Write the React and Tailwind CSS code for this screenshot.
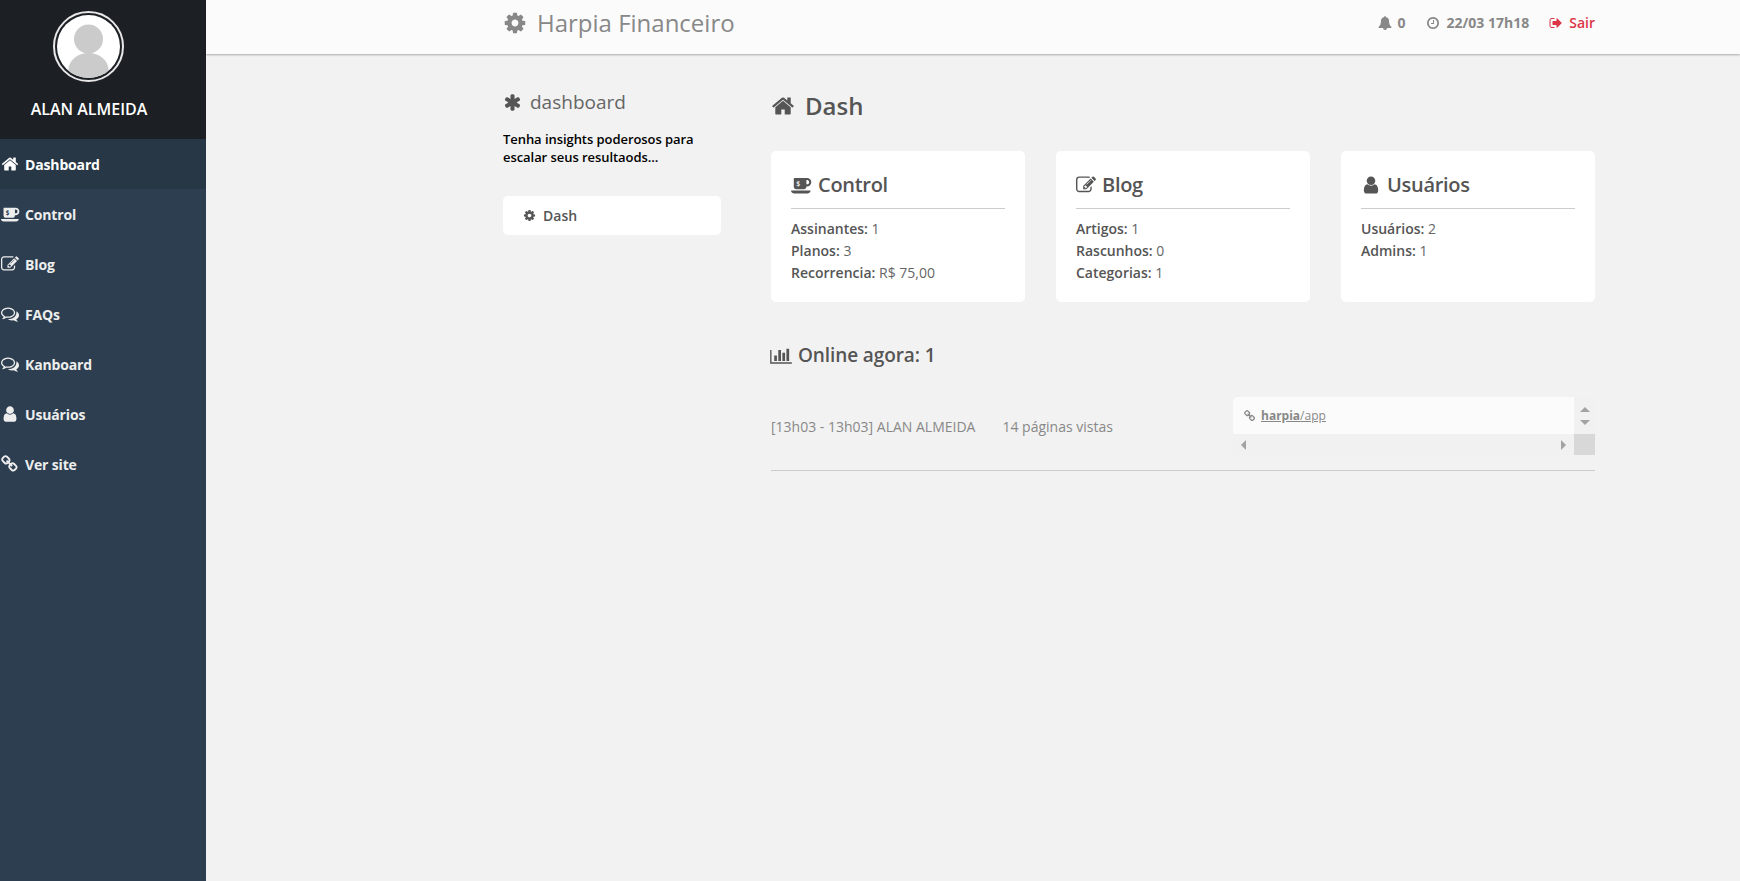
const PATHS = {
  home: "M1472 992v480q0 26-19 45t-45 19h-384v-384h-256v384h-384q-26 0-45-19t-19-45v-480q0-1 .5-3t.5-3l575-474 575 474q1 2 1 6zm223-69l-62 74q-8 9-21 11h-3q-13 0-21-7l-692-577-692 577q-12 8-24 7-13-2-21-11l-62-74q-8-10-7-23.5t11-21.5l719-599q32-26 76-26t76 26l244 204v-195q0-14 9-23t23-9h192q14 0 23 9t9 23v408l219 182q10 8 11 21.5t-7 23.5z",
  cog: "M1152 896q0-106-75-181t-181-75-181 75-75 181 75 181 181 75 181-75 75-181zm512-109v222q0 12-8 23t-20 13l-185 28q-19 54-39 91 35 50 107 138 10 12 10 25t-9 23q-27 37-99 108t-94 71q-12 0-26-9l-138-108q-44 23-91 38-16 136-29 186-7 28-36 28h-222q-14 0-24.5-8.5t-11.5-21.5l-28-184q-49-16-90-37l-141 107q-10 9-25 9-14 0-25-11-126-114-165-168-7-10-7-23 0-12 8-23 15-21 51-66.5t54-70.5q-27-50-41-99l-183-27q-13-2-21-12.5t-8-23.5v-222q0-12 8-23t19-13l186-28q14-46 39-92-40-57-107-138-10-12-10-24 0-10 9-23 26-36 98.5-107.5t94.5-71.5q13 0 26 10l138 107q44-23 91-38 16-136 29-186 7-28 36-28h222q14 0 24.5 8.5t11.5 21.5l28 184q49 16 90 37l142-107q9-9 24-9 13 0 25 10 129 119 165 170 7 8 7 22 0 12-8 23-15 21-51 66.5t-54 70.5q26 50 41 98l183 28q13 2 21 12.5t8 23.5z",
  user: "M1536 1399q0 109-62.5 187t-150.5 78h-854q-88 0-150.5-78t-62.5-187q0-85 8.5-160.5t31.5-152 58.5-131 94-89 134.5-34.5q131 128 313 128t313-128q76 0 134.5 34.5t94 89 58.5 131 31.5 152 8.5 160.5zm-256-887q0 159-112.5 271.5t-271.5 112.5-271.5-112.5-112.5-271.5 112.5-271.5 271.5-112.5 271.5 112.5 112.5 271.5z",
  asterisk: "M1546 1050q46 26 59.5 77.5t-12.5 97.5l-64 110q-26 46-77.5 59.5t-97.5-12.5l-266-153v307q0 52-38 90t-90 38h-128q-52 0-90-38t-38-90v-307l-266 153q-46 26-97.5 12.5t-77.5-59.5l-64-110q-26-46-12.5-97.5t59.5-77.5l266-154-266-154q-46-26-59.5-77.5t12.5-97.5l64-110q26-46 77.5-59.5t97.5 12.5l266 153v-307q0-52 38-90t90-38h128q52 0 90 38t38 90v307l266-153q46-26 97.5-12.5t77.5 59.5l64 110q26 46 12.5 97.5t-59.5 77.5l-266 154z",
  clock: "M1024 544v448q0 14-9 23t-23 9h-320q-14 0-23-9t-9-23v-64q0-14 9-23t23-9h224v-352q0-14 9-23t23-9h64q14 0 23 9t9 23zm416 352q0-148-73-273t-198-198-273-73-273 73-198 198-73 273 73 273 198 198 273 73 273-73 198-198 73-273zm224 0q0 209-103 385.5t-279.5 279.5-385.5 103-385.5-103-279.5-279.5-103-385.5 103-385.5 279.5-279.5 385.5-103 385.5 103 279.5 279.5 103 385.5z",
  bell: "M912 1696q0-16-16-16-59 0-101.5-42.5t-42.5-101.5q0-16-16-16t-16 16q0 73 51.5 124.5t124.5 51.5q16 0 16-16zm816-288q0 52-38 90t-90 38h-448q0 106-75 181t-181 75-181-75-75-181h-448q-52 0-90-38t-38-90q50-42 91-88t85-119.5 74.5-158.5 50-206 19.5-260q0-152 117-282.5t307-158.5q-8-19-8-39 0-40 28-68t68-28 68 28 28 68q0 20-8 39 190 28 307 158.5t117 282.5q0 139 19.5 260t50 206 74.5 158.5 85 119.5 91 88z",
  signout: "M704 1440q0 4 1 20t.5 26.5-3 23.5-10 19.5-20.5 6.5h-320q-119 0-203.5-84.5t-84.5-203.5v-704q0-119 84.5-203.5t203.5-84.5h320q13 0 22.5 9.5t9.5 22.5q0 4 1 20t.5 26.5-3 23.5-10 19.5-20.5 6.5h-320q-66 0-113 47t-47 113v704q0 66 47 113t113 47h312l11.5 1 11.5 3 8 5.5 7 9 2 13.5zm928-544q0 26-19 45l-544 544q-19 19-45 19t-45-19-19-45v-288h-448q-26 0-45-19t-19-45v-384q0-26 19-45t45-19h448v-288q0-26 19-45t45-19 45 19l544 544q19 19 19 45z",
  edit: "M888 1184l116-116-152-152-116 116v56h96v96h56zm440-720q-16-16-33 1l-350 350q-17 17-1 33t33-1l350-350q17-17 1-33zm80 594v190q0 119-84.5 203.5t-203.5 84.5h-832q-119 0-203.5-84.5t-84.5-203.5v-832q0-119 84.5-203.5t203.5-84.5h832q63 0 117 25 15 7 18 23 3 17-9 29l-49 49q-14 14-32 8-23-6-45-6h-832q-66 0-113 47t-47 113v832q0 66 47 113t113 47h832q66 0 113-47t47-113v-126q0-13 9-22l64-64q15-15 35-7t20 29zm-96-738l288 288-672 672h-288v-288zm444 132l-92 92-288-288 92-92q28-28 68-28t68 28l152 152q28 28 28 68t-28 68z",
  comments: "M704 384q-153 0-286 52t-211.5 141-78.5 191q0 82 53 158t149 132l97 56-35 84q34-20 62-39l44-31 53 10q78 14 153 14 153 0 286-52t211.5-141 78.5-191-78.5-191-211.5-141-286-52zm0-128q191 0 353.5 68.5t256.5 186.5 94 257-94 257-256.5 186.5-353.5 68.5q-86 0-176-16-124 88-278 128-36 9-86 16h-3q-11 0-20.5-8t-11.5-21q-1-3-1-6.5t.5-6.5 2-6l2.5-5 3.5-5.5 4-5 4.5-5 4-4.5q5-6 23-25t26-29.5 22.5-29 25-38.5 20.5-44q-124-72-195-177t-71-224q0-139 94-257t256.5-186.5 353.5-68.5zm822 1169q10 24 20.5 44t25 38.5 22.5 29 26 29.5 23 25q1 1 4 4.5t4.5 5 4 5 3.5 5.5l2.5 5 2 6 .5 6.5-1 6.5q-3 14-13 22t-22 7q-50-7-86-16-154-40-278-128-90 16-176 16-271 0-472-132 58 4 88 4 161 0 309-45t264-129q125-92 192-212t67-254q0-77-23-152 129 71 204 178t75 230q0 120-71 224.5t-195 176.5z",
  link: "M1456 1216q0-40-28-68l-208-208q-28-28-68-28-42 0-72 32 3 3 19 18.5t21.5 21.5 15 19 13 25.5 3.5 27.5q0 40-28 68t-68 28q-15 0-27.5-3.5t-25.5-13-19-15-21.5-21.5-18.5-19q-33 31-33 73 0 40 28 68l206 207q27 27 68 27 40 0 68-26l147-146q28-28 28-67zm-703-705q0-40-28-68l-206-207q-28-28-68-28-39 0-68 27l-147 146q-28 28-28 67 0 40 28 68l208 208q27 27 68 27 42 0 72-31-3-3-19-18.5t-21.5-21.5-15-19-13-25.5-3.5-27.5q0-40 28-68t68-28q15 0 27.5 3.5t25.5 13 19 15 21.5 21.5 18.5 19q33-31 33-73zm895 705q0 120-85 203l-147 146q-83 83-203 83-121 0-204-85l-206-207q-83-83-83-203 0-123 88-209l-88-88q-86 88-208 88-120 0-204-84l-208-208q-84-84-84-204t85-203l147-146q83-83 203-83 121 0 204 85l206 207q83 83 83 203 0 123-88 209l88 88q86-88 208-88 120 0 204 84l208 208q84 84 84 204z",
  chart: "M640 896v512h-256v-512h256zm384-512v1024h-256v-1024h256zm1024 1152v128h-2048v-1280h128v1152h1920zm-640-896v768h-256v-768h256zm384-384v1152h-256v-1152h256z",
};

function Icon({ name, className }) {
  const box = name === "chart" ? "0 0 2048 1792" : "0 0 1792 1792";
  return (
    <svg viewBox={box} className={className} fill="currentColor">
      <path d={PATHS[name]} />
    </svg>
  );
}

function CoffeeIcon({ className, dollar }) {
  return (
    <svg viewBox="-64 0 1920 1792" className={className} fill="currentColor">
      <path d="M1600 640q0-80-56-136t-136-56h-64v384h64q80 0 136-56t56-136zm-1664 768h1792q0 106-75 181t-181 75h-1280q-106 0-181-75t-75-181zm1856-768q0 159-112.5 271.5t-271.5 112.5h-64v32q0 92-66 158t-158 66h-704q-92 0-158-66t-66-158v-736q0-26 19-45t45-19h1152q159 0 271.5 112.5t112.5 271.5z" />
      <text x="600" y="960" fontSize="620" fontFamily="'Open Sans', sans-serif" textAnchor="middle" fill={dollar}>
        $
      </text>
    </svg>
  );
}

const menu = [
  { label: "Dashboard", icon: "home", active: true },
  { label: "Control", icon: "coffee" },
  { label: "Blog", icon: "edit" },
  { label: "FAQs", icon: "comments" },
  { label: "Kanboard", icon: "comments" },
  { label: "Usuários", icon: "user" },
  { label: "Ver site", icon: "link" },
];

const cards = [
  {
    title: "Control",
    icon: "coffee",
    rows: [
      ["Assinantes:", "1"],
      ["Planos:", "3"],
      ["Recorrencia:", "R$ 75,00"],
    ],
  },
  {
    title: "Blog",
    icon: "edit",
    rows: [
      ["Artigos:", "1"],
      ["Rascunhos:", "0"],
      ["Categorias:", "1"],
    ],
  },
  {
    title: "Usuários",
    icon: "user",
    rows: [
      ["Usuários:", "2"],
      ["Admins:", "1"],
    ],
  },
];

function Sidebar() {
  return (
    <aside className="w-[206px] shrink-0 bg-[#2c3e50]">
      <div className="h-[139px] bg-[#1c1f24] flex flex-col items-center pt-[11px] pr-[30px]">
        <div className="w-[71px] h-[71px] rounded-full border-2 border-[#e8e8e8] p-[2px]">
          <div className="w-full h-full rounded-full bg-white overflow-hidden">
            <svg viewBox="0 0 63 63" className="w-full h-full" fill="#cbcbcb">
              <circle cx="31.5" cy="24" r="14.5" />
              <ellipse cx="31.5" cy="55" rx="20" ry="17" />
            </svg>
          </div>
        </div>
        <p className="mt-[16px] ml-[2px] text-[16px] leading-[22px] font-semibold text-white">ALAN ALMEIDA</p>
      </div>
      <nav>
        {menu.map((item) => (
          <a
            key={item.label}
            className={`h-[50px] flex items-center text-[14px] font-bold tracking-[-0.15px] ${item.active ? "bg-[#273746] text-white" : "text-[#eeeeee]"}`}
          >
            <span className="w-[25px] pl-[1px] shrink-0">
              {item.icon === "coffee" ? (
                <CoffeeIcon className="w-[19px] h-[18px]" dollar="#2c3e50" />
              ) : (
                <Icon name={item.icon} className="w-[18px] h-[18px]" />
              )}
            </span>
            {item.label}
          </a>
        ))}
      </nav>
    </aside>
  );
}

function Header() {
  return (
    <header className="h-[54px] bg-[#fbfbfb] shadow-[0_1px_2px_rgba(0,0,0,0.3)]">
      <div className="ml-[297px] w-[1092px] h-full flex items-center justify-between pb-[9px]">
        <h1 className="flex items-center gap-[10px] text-[24px] text-[#888888]">
          <Icon name="cog" className="w-[24px] h-[24px]" />
          Harpia Financeiro
        </h1>
        <div className="flex items-center text-[14px] font-semibold text-[#888888]">
          <Icon name="bell" className="w-[14px] h-[14px] mr-[6px]" />
          <span className="font-bold">0</span>
          <Icon name="clock" className="w-[14px] h-[14px] ml-[20px] mr-[7px]" />
          <span className="font-bold">22/03 17h18</span>
          <Icon name="signout" className="w-[14px] h-[14px] ml-[20px] mr-[6px] text-[#dc3545]" />
          <span className="text-[#dc3545]">Sair</span>
        </div>
      </div>
    </header>
  );
}

function Card({ card }) {
  return (
    <div className="h-[151px] bg-white rounded-[5px] px-[20px] pt-[21px]">
      <h2 className="flex items-center gap-[6px] h-[26px] text-[20px] font-semibold tracking-[-0.3px] text-[#555555] leading-none">
        {card.icon === "coffee" ? (
          <CoffeeIcon className="w-[21px] h-[20px]" dollar="#ffffff" />
        ) : (
          <Icon name={card.icon} className="w-[20px] h-[20px]" />
        )}
        {card.title}
      </h2>
      <div className="mt-[10px] border-t border-[#cccccc] pt-[9px] text-[14px] leading-[22px] text-[#666666]">
        {card.rows.map(([label, value]) => (
          <p key={label}>
            <span className="font-semibold text-[#555555]">{label}</span> {value}
          </p>
        ))}
      </div>
    </div>
  );
}

function PagesBox() {
  return (
    <div className="w-[362px] h-[58px] flex flex-col">
      <div className="flex h-[37px]">
        <div className="flex-1 bg-[#fbfbfb] rounded-tl-[5px] flex items-center pl-[11px] gap-[5px] text-[12px] text-[#888888] underline">
          <Icon name="link" className="w-[12px] h-[12px]" />
          <span>
            <b>harpia</b>/app
          </span>
        </div>
        <div className="w-[21px] bg-[#f1f1f1] flex flex-col items-center justify-center gap-[8px]">
          <svg viewBox="0 0 10 5" className="w-[10px] h-[5px]" fill="#a3a3a3">
            <path d="M0 5 5 0l5 5z" />
          </svg>
          <svg viewBox="0 0 10 5" className="w-[10px] h-[5px]" fill="#a3a3a3">
            <path d="M0 0h10L5 5z" />
          </svg>
        </div>
      </div>
      <div className="flex h-[21px]">
        <div className="flex-1 bg-[#f1f1f1] flex items-center justify-between px-[8px]">
          <svg viewBox="0 0 5 10" className="w-[5px] h-[10px]" fill="#a3a3a3">
            <path d="M5 0v10L0 5z" />
          </svg>
          <svg viewBox="0 0 5 10" className="w-[5px] h-[10px]" fill="#a3a3a3">
            <path d="M0 0l5 5-5 5z" />
          </svg>
        </div>
        <div className="w-[21px] bg-[#d8d8d8]" />
      </div>
    </div>
  );
}

function Content() {
  return (
    <div className="ml-[297px] w-[1092px] flex pt-[33px]">
      <div className="w-[218px] shrink-0">
        <h2 className="flex items-center gap-[8px] text-[19px] leading-[30px] text-[#666666]">
          <Icon name="asterisk" className="w-[19px] h-[19px] text-[#555555]" />
          dashboard
        </h2>
        <p className="mt-[13px] text-[13px] leading-[18px] font-semibold tracking-[-0.06px] text-black">
          Tenha insights poderosos para
          <br />
          escalar seus resultaods...
        </p>
        <a className="mt-[30px] h-[39px] bg-white rounded-[5px] flex items-center gap-[7px] pl-[20px] text-[14px] font-semibold text-[#555555]">
          <Icon name="cog" className="w-[13px] h-[13px]" />
          Dash
        </a>
      </div>
      <div className="ml-[50px] w-[824px] pt-[3px]">
        <h1 className="flex items-center gap-[10px] h-[32px] text-[24px] font-semibold text-[#555555]">
          <Icon name="home" className="w-[24px] h-[24px]" />
          Dash
        </h1>
        <div className="mt-[29px] grid grid-cols-3 gap-[31px]">
          {cards.map((card) => (
            <Card key={card.title} card={card} />
          ))}
        </div>
        <h3 className="mt-[40px] flex items-center gap-[6px] h-[26px] text-[19px] font-semibold tracking-[-0.1px] text-[#555555]">
          <Icon name="chart" className="w-[22px] h-[19px] -ml-[1px]" />
          Online agora: 1
        </h3>
        <div className="mt-[29px] flex items-center justify-between border-b border-[#cccccc] pb-[15px]">
          <div className="flex text-[14px] text-[#888888] gap-[27px]">
            <span>[13h03 - 13h03] ALAN ALMEIDA</span>
            <span>14 páginas vistas</span>
          </div>
          <PagesBox />
        </div>
      </div>
    </div>
  );
}

export default function App() {
  return (
    <div className="flex min-h-[881px] bg-[#f2f2f2] font-['Open_Sans',sans-serif]">
      <Sidebar />
      <main className="flex-1">
        <Header />
        <Content />
      </main>
    </div>
  );
}
